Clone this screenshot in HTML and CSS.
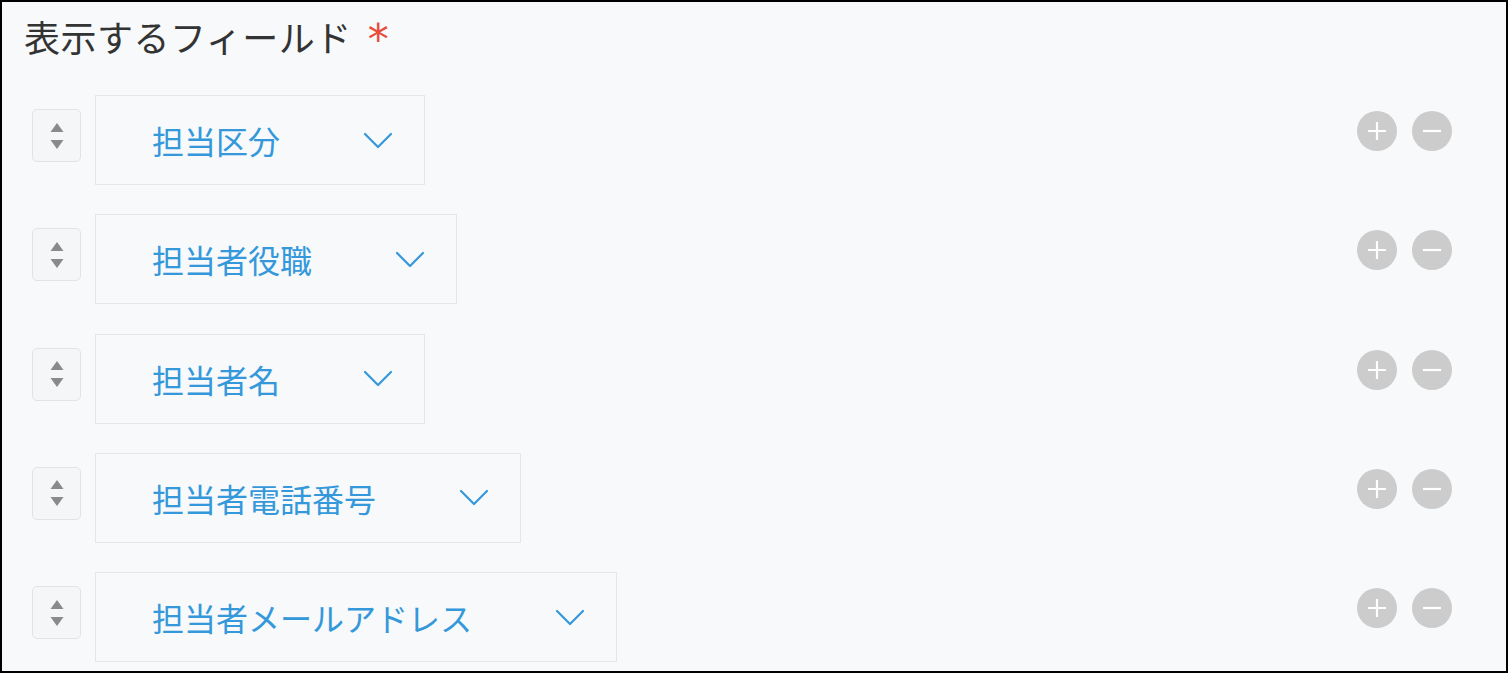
FILE: index.html
```html
<!DOCTYPE html>
<html lang="ja">
<head>
<meta charset="utf-8">
<title>表示するフィールド</title>
<link rel="stylesheet" href="styles.css">
</head>
<body>
<div class="panel">
  <div class="title">表示するフィールド<span class="req">*</span></div>
  <div class="rows">
    <div class="row">
      <div class="stepper"><svg width="16" height="30" viewBox="0 0 16 30"><path d="M8 2 L14.5 11 L1.5 11 Z" fill="#8a8a8a"/><path d="M1.5 19 L14.5 19 L8 28 Z" fill="#8a8a8a"/></svg></div>
      <div class="select"><span class="label">担当区分</span><svg class="chev" width="30" height="17" viewBox="0 0 30 17"><path d="M2 2 L15 15 L28 2" fill="none" stroke="#3498db" stroke-width="2.2" stroke-linecap="round" stroke-linejoin="round"/></svg></div>
      <div class="spacer"></div>
      <div class="btns"><span class="circle"><svg width="40" height="40" viewBox="0 0 40 40"><path d="M20 11 V29 M11 20 H29" stroke="#fff" stroke-width="2.2"/></svg></span><span class="circle"><svg width="40" height="40" viewBox="0 0 40 40"><path d="M11 20 H29" stroke="#fff" stroke-width="2.2"/></svg></span></div>
    </div>
    <div class="row">
      <div class="stepper"><svg width="16" height="30" viewBox="0 0 16 30"><path d="M8 2 L14.5 11 L1.5 11 Z" fill="#8a8a8a"/><path d="M1.5 19 L14.5 19 L8 28 Z" fill="#8a8a8a"/></svg></div>
      <div class="select"><span class="label">担当者役職</span><svg class="chev" width="30" height="17" viewBox="0 0 30 17"><path d="M2 2 L15 15 L28 2" fill="none" stroke="#3498db" stroke-width="2.2" stroke-linecap="round" stroke-linejoin="round"/></svg></div>
      <div class="spacer"></div>
      <div class="btns"><span class="circle"><svg width="40" height="40" viewBox="0 0 40 40"><path d="M20 11 V29 M11 20 H29" stroke="#fff" stroke-width="2.2"/></svg></span><span class="circle"><svg width="40" height="40" viewBox="0 0 40 40"><path d="M11 20 H29" stroke="#fff" stroke-width="2.2"/></svg></span></div>
    </div>
    <div class="row">
      <div class="stepper"><svg width="16" height="30" viewBox="0 0 16 30"><path d="M8 2 L14.5 11 L1.5 11 Z" fill="#8a8a8a"/><path d="M1.5 19 L14.5 19 L8 28 Z" fill="#8a8a8a"/></svg></div>
      <div class="select"><span class="label">担当者名</span><svg class="chev" width="30" height="17" viewBox="0 0 30 17"><path d="M2 2 L15 15 L28 2" fill="none" stroke="#3498db" stroke-width="2.2" stroke-linecap="round" stroke-linejoin="round"/></svg></div>
      <div class="spacer"></div>
      <div class="btns"><span class="circle"><svg width="40" height="40" viewBox="0 0 40 40"><path d="M20 11 V29 M11 20 H29" stroke="#fff" stroke-width="2.2"/></svg></span><span class="circle"><svg width="40" height="40" viewBox="0 0 40 40"><path d="M11 20 H29" stroke="#fff" stroke-width="2.2"/></svg></span></div>
    </div>
    <div class="row">
      <div class="stepper"><svg width="16" height="30" viewBox="0 0 16 30"><path d="M8 2 L14.5 11 L1.5 11 Z" fill="#8a8a8a"/><path d="M1.5 19 L14.5 19 L8 28 Z" fill="#8a8a8a"/></svg></div>
      <div class="select"><span class="label">担当者電話番号</span><svg class="chev" width="30" height="17" viewBox="0 0 30 17"><path d="M2 2 L15 15 L28 2" fill="none" stroke="#3498db" stroke-width="2.2" stroke-linecap="round" stroke-linejoin="round"/></svg></div>
      <div class="spacer"></div>
      <div class="btns"><span class="circle"><svg width="40" height="40" viewBox="0 0 40 40"><path d="M20 11 V29 M11 20 H29" stroke="#fff" stroke-width="2.2"/></svg></span><span class="circle"><svg width="40" height="40" viewBox="0 0 40 40"><path d="M11 20 H29" stroke="#fff" stroke-width="2.2"/></svg></span></div>
    </div>
    <div class="row">
      <div class="stepper"><svg width="16" height="30" viewBox="0 0 16 30"><path d="M8 2 L14.5 11 L1.5 11 Z" fill="#8a8a8a"/><path d="M1.5 19 L14.5 19 L8 28 Z" fill="#8a8a8a"/></svg></div>
      <div class="select"><span class="label">担当者メールアドレス</span><svg class="chev" width="30" height="17" viewBox="0 0 30 17"><path d="M2 2 L15 15 L28 2" fill="none" stroke="#3498db" stroke-width="2.2" stroke-linecap="round" stroke-linejoin="round"/></svg></div>
      <div class="spacer"></div>
      <div class="btns"><span class="circle"><svg width="40" height="40" viewBox="0 0 40 40"><path d="M20 11 V29 M11 20 H29" stroke="#fff" stroke-width="2.2"/></svg></span><span class="circle"><svg width="40" height="40" viewBox="0 0 40 40"><path d="M11 20 H29" stroke="#fff" stroke-width="2.2"/></svg></span></div>
    </div>
  </div>
</div>
</body>
</html>
```

FILE: styles.css
```css
html, body {
  margin: 0;
  padding: 0;
  background: #000;
}
.panel {
  box-sizing: border-box;
  width: 1508px;
  height: 673px;
  border: 2px solid #000;
  background: #f7f9fa;
  overflow: hidden;
  padding: 12px 54px 0 22px;
  font-family: "Noto Sans CJK JP", "Noto Sans", sans-serif;
}
.title {
  font-size: 36px;
  line-height: 44px;
  color: #333333;
  height: 44px;
  white-space: nowrap;
  letter-spacing: 0.5px;
}
.req {
  color: #e74c3c;
  margin-left: 16px;
  font-family: "DejaVu Sans", sans-serif;
  font-size: 42px;
  vertical-align: -2px;
}
.rows {
  margin-top: 37px;
  display: flex;
  flex-direction: column;
  gap: 29.25px;
  padding-left: 8px;
}
.row {
  display: flex;
  align-items: flex-start;
  height: 90px;
}
.stepper {
  box-sizing: border-box;
  width: 49px;
  height: 53px;
  margin-top: 14px;
  border: 1px solid #e1e4e6;
  border-radius: 5px;
  background: #f4f6f7;
  display: flex;
  align-items: center;
  justify-content: center;
}
.select {
  box-sizing: border-box;
  height: 90px;
  margin-left: 14px;
  border: 1px solid #e3e7e8;
  background: #f7f9fa;
  display: flex;
  align-items: center;
  padding: 0 31px 0 56px;
}
.label {
  font-size: 32px;
  color: #3498db;
  line-height: 40px;
  white-space: nowrap;
}
.chev {
  margin-left: 83px;
  display: block;
}
.spacer {
  flex: 1;
}
.btns {
  display: flex;
  gap: 15px;
  margin-top: 16px;
}
.circle {
  width: 40px;
  height: 40px;
  border-radius: 50%;
  background: #cccccc;
  display: block;
}
.circle svg {
  display: block;
}
```
